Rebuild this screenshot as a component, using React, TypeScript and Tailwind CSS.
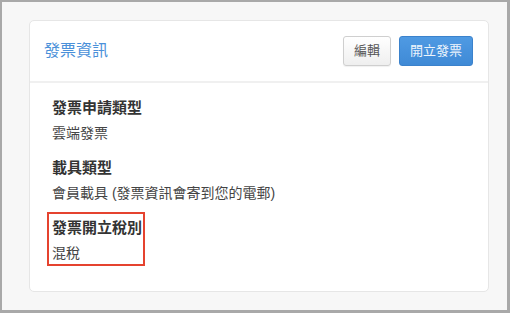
const font = { fontFamily: '"Liberation Sans", "Noto Sans CJK TC", sans-serif' };

function Field({ label, value }: { label: string; value: string }) {
  return (
    <div>
      <p className="text-[15px] font-bold leading-[24px] text-[#333]">{label}</p>
      <p className="mt-[2px] text-[14px] leading-[22px] text-[#444]">{value}</p>
    </div>
  );
}

export default function App() {
  return (
    <div
      style={font}
      className="h-[313px] w-[510px] border-t-2 border-l-2 border-r-[3px] border-b-[3px] border-[#a9a9a9] bg-[#f7f7f7]"
    >
      <div className="ml-[27px] mt-[18px] h-[272px] w-[460px] rounded-[5px] border border-[#e6e6e6] bg-white">
        <header className="flex h-[62px] items-center justify-between border-b-2 border-[#f0f0f0] pl-[14px] pr-[15px]">
          <h2 className="text-[16px] text-[#4a90d9]">發票資訊</h2>
          <div className="flex items-center gap-[8px]">
            <button className="h-[30px] rounded-[3px] border border-[#cfcfcf] bg-gradient-to-b from-white to-[#efefef] px-[10px] text-[13px] text-[#555] shadow-[0_1px_1px_rgba(0,0,0,0.06)]">
              編輯
            </button>
            <button className="h-[30px] rounded-[3px] border border-[#3b82cc] bg-gradient-to-b from-[#4f9ae3] to-[#3f8ad6] px-[10px] text-[13px] text-[#eef5fc]">
              開立發票
            </button>
          </div>
        </header>
        <div className="flex flex-col gap-[12px] pl-[22px] pt-[13px]">
          <Field label="發票申請類型" value="雲端發票" />
          <Field label="載具類型" value="會員載具 (發票資訊會寄到您的電郵)" />
          <div className="-mb-[2px] -ml-[5px] -mt-[4px] w-fit border-2 border-[#e5432f] pl-[3px] pr-[1px] pt-[2px]">
            <Field label="發票開立稅別" value="混稅" />
          </div>
        </div>
      </div>
    </div>
  );
}
